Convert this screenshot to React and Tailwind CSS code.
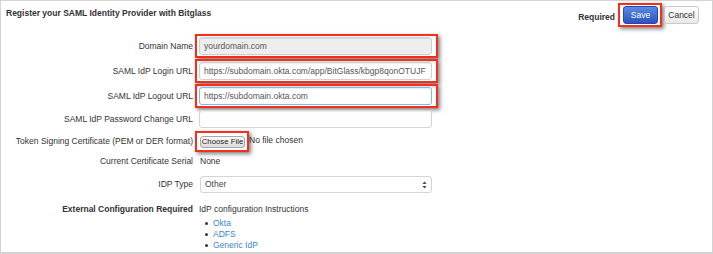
import React from 'react';

const RedBox = ({ className = '', children }) => (
  <div className={`border-2 border-[#f2301b] shadow-[2px_2px_4px_rgba(0,0,0,0.5)] ${className}`}>{children}</div>
);

const Label = ({ children, bold }) => (
  <div className={`w-[192px] shrink-0 text-right ${bold ? 'font-bold' : ''}`}>{children}</div>
);

const inputBase =
  'h-[18px] w-[233px] rounded-[3px] border px-[4px] flex items-center text-[#555] shadow-[inset_0_1px_1px_rgba(0,0,0,0.08)] whitespace-nowrap overflow-hidden';

const App = () => {
  return (
    <div
      className="w-[713px] h-[254px] bg-white border border-b-2 border-[#d3d3d3] text-[#333] text-[8.5px] leading-[11px] overflow-hidden"
      style={{ fontFamily: '"Liberation Sans", Arial, Helvetica, sans-serif' }}
    >
      {/* Header */}
      <div className="h-[33px] flex justify-between">
        <div className="pl-[5px] pt-[7px] font-bold text-[#333]">Register your SAML Identity Provider with Bitglass</div>
        <div className="flex items-start pt-[2px] pr-[13px]">
          <span className="font-bold mt-[9px] mr-[3px]">Required</span>
          <RedBox className="pl-[3px] pr-[2px] py-[1px]">
            <div className="h-[18px] w-[35px] rounded-[3px] border border-[#2747a8] bg-gradient-to-b from-[#5c8ae2] to-[#2b53c0] text-white flex items-center justify-center">
              Save
            </div>
          </RedBox>
          <div className="ml-[2px] mt-[3px] h-[18px] w-[35px] rounded-[3px] border border-[#c8c8c8] bg-gradient-to-b from-white to-[#e8e8e8] flex items-center justify-center text-[#333]">
            Cancel
          </div>
        </div>
      </div>

      {/* Form */}
      <div className="flex flex-col">
        <div className="h-[24px] flex items-center gap-[2px]">
          <Label>Domain Name</Label>
          <RedBox className="h-[24px] w-[243px] pl-[2px] flex items-center">
            <div className={`${inputBase} bg-[#eeeeee] border-[#cfcfcf]`}>yourdomain.com</div>
          </RedBox>
        </div>
        <div className="h-[24px] mt-[1px] flex items-center gap-[2px]">
          <Label>SAML IdP Login URL</Label>
          <RedBox className="h-[24px] w-[243px] pl-[2px] flex items-center">
            <div className={`${inputBase} bg-white border-[#cfcfcf] text-[#444]`}>
              https://subdomain.okta.com/app/BitGlass/kbgp8qonOTUJF
            </div>
          </RedBox>
        </div>
        <div className="h-[24px] mt-[1px] flex items-center gap-[2px]">
          <Label>SAML IdP Logout URL</Label>
          <RedBox className="h-[24px] w-[243px] pl-[2px] flex items-center">
            <div className={`${inputBase} bg-white border-[#7fb8ea] text-[#444] shadow-[0_0_3px_rgba(102,175,233,0.7)]`}>
              https://subdomain.okta.com
            </div>
          </RedBox>
        </div>
        <div className="h-[18px] mt-[2px] flex items-center gap-[2px]">
          <Label>SAML IdP Password Change URL</Label>
          <div className={`${inputBase} ml-[4px] bg-white border-[#d4d4d4]`}></div>
        </div>
        <div className="h-[21px] mt-[3px] flex items-center gap-[2px]">
          <Label>Token Signing Certificate (PEM or DER format)</Label>
          <RedBox className="h-[21px] w-[54px] pl-[3px] flex items-center">
            <div className="h-[12px] w-[45px] rounded-[3px] border border-[#a9a9a9] bg-gradient-to-b from-[#fafafa] to-[#dcdcdc] flex items-center justify-center text-[7.8px] text-[#222] font-medium whitespace-nowrap">
              Choose File
            </div>
          </RedBox>
          <span className="-ml-[2px] text-[#333] mb-[2px]">No file chosen</span>
        </div>
        <div className="h-[19px] flex items-center gap-[2px]">
          <Label>Current Certificate Serial</Label>
          <span className="ml-[5px]">None</span>
        </div>
        <div className="h-[17px] mt-[5px] flex items-center gap-[2px]">
          <Label>IDP Type</Label>
          <div className="ml-[5px] h-[17px] w-[232px] rounded-[3px] border border-[#d4d4d4] bg-white flex items-center justify-between pl-[4px] pr-[4px] text-[#444]">
            <span>Other</span>
            <svg width="5" height="8" viewBox="0 0 5 8">
              <path d="M2.5 0.5 L4.5 3 L0.5 3 Z" fill="#444" />
              <path d="M2.5 7.5 L4.5 5 L0.5 5 Z" fill="#444" />
            </svg>
          </div>
        </div>
        <div className="mt-[11px] flex items-start gap-[2px]">
          <Label bold>External Configuration Required</Label>
          <div className="ml-[4px] flex flex-col">
            <span>IdP configuration Instructions</span>
            <ul className="mt-[3px] flex flex-col">
              {['Okta', 'ADFS', 'Generic IdP'].map((t) => (
                <li key={t} className="flex items-center h-[11px]">
                  <span className="ml-[6px] w-[3px] h-[3px] rounded-full bg-[#333]"></span>
                  <span className="ml-[5px] text-[#3a87cf]">{t}</span>
                </li>
              ))}
            </ul>
          </div>
        </div>
      </div>
    </div>
  );
};

export default App;
